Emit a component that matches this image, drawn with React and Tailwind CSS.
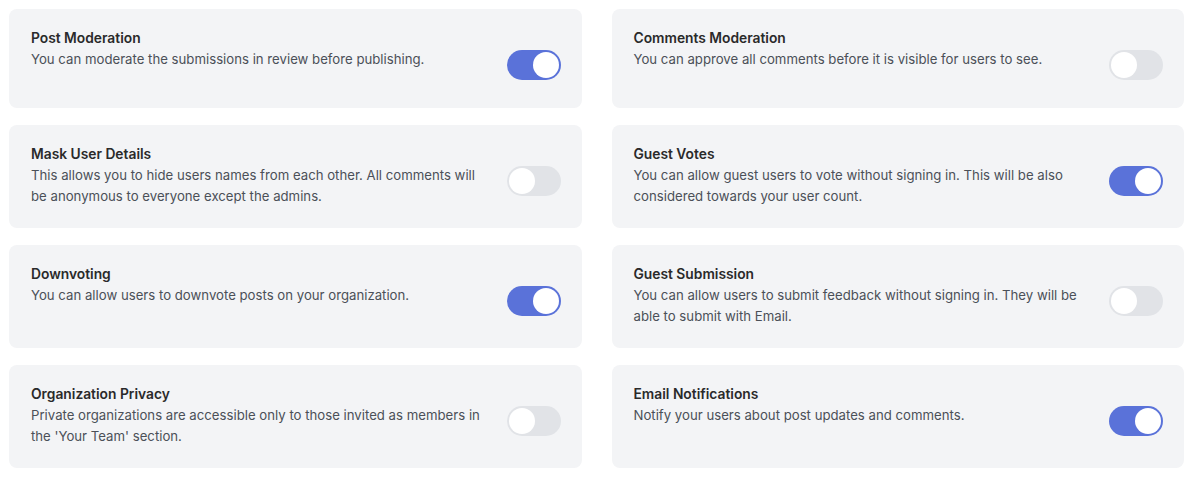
import { useState } from "react";

const settings = [
  {
    title: "Post Moderation",
    desc: "You can moderate the submissions in review before publishing.",
    on: true,
  },
  {
    title: "Comments Moderation",
    desc: "You can approve all comments before it is visible for users to see.",
    on: false,
  },
  {
    title: "Mask User Details",
    desc: "This allows you to hide users names from each other. All comments will be anonymous to everyone except the admins.",
    on: false,
  },
  {
    title: "Guest Votes",
    desc: "You can allow guest users to vote without signing in. This will be also considered towards your user count.",
    on: true,
  },
  {
    title: "Downvoting",
    desc: "You can allow users to downvote posts on your organization.",
    on: true,
  },
  {
    title: "Guest Submission",
    desc: "You can allow users to submit feedback without signing in. They will be able to submit with Email.",
    on: false,
  },
  {
    title: "Organization Privacy",
    desc: "Private organizations are accessible only to those invited as members in the 'Your Team' section.",
    on: false,
  },
  {
    title: "Email Notifications",
    desc: "Notify your users about post updates and comments.",
    on: true,
  },
];

const Toggle = ({ on, onClick }) => {
  return (
    <button
      onClick={onClick}
      className={
        on
          ? "mt-[22px] flex h-[30px] w-[54px] shrink-0 items-center justify-end rounded-full bg-[#5a72d9] p-[2px]"
          : "mt-[22px] flex h-[30px] w-[54px] shrink-0 items-center justify-start rounded-full bg-[#e1e3e7] p-[2px]"
      }
    >
      <span className="h-[26px] w-[26px] rounded-full bg-white" />
    </button>
  );
};

const SettingCard = ({ item }) => {
  const [on, setOn] = useState(item.on);
  return (
    <div className="flex min-h-[99px] items-start justify-between gap-6 rounded-lg bg-[#f3f4f6] pt-[19px] pb-[21px] pl-[22px] pr-[21px]">
      <div className="max-w-[462px]">
        <h3 className="text-[13.8px] font-semibold leading-[21px] text-[#2a2a2a]">{item.title}</h3>
        <p className="text-[13.2px] leading-[21px] text-[#4b5058]">{item.desc}</p>
      </div>
      <Toggle on={on} onClick={() => setOn(!on)} />
    </div>
  );
};

const App = () => {
  return (
    <div
      className="grid grid-cols-2 gap-x-[30px] gap-y-[17px] bg-white p-[9px]"
      style={{ fontFamily: "Inter, 'Noto Sans', sans-serif" }}
    >
      {settings.map((item) => (
        <SettingCard key={item.title} item={item} />
      ))}
    </div>
  );
};

export default App;
